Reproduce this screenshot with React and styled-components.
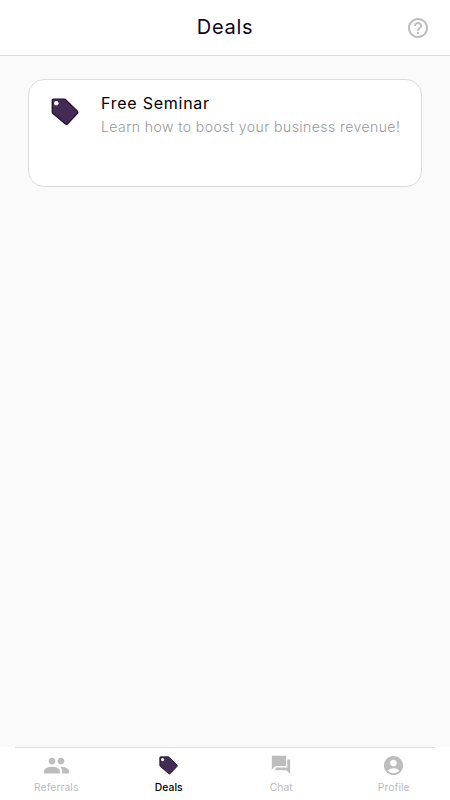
import styled, { createGlobalStyle } from "styled-components";
import { MdAccountCircle, MdHelpOutline, MdPeople } from "react-icons/md";

const GlobalStyle = createGlobalStyle`
  * {
    box-sizing: border-box;
  }

  body {
    margin: 0;
    background-color: #fafafa;
    font-family: "Inter", "Open Sans", sans-serif;
  }
`;

const Page = styled.div`
  display: flex;
  flex-direction: column;
  height: 100vh;
`;

const Header = styled.header`
  display: grid;
  grid-template-columns: 1fr auto 1fr;
  align-items: center;
  height: 56px;
  padding: 0 20px;
  background-color: white;
  border-bottom: 1px solid #dbdbdb;
`;

const Title = styled.h1`
  grid-column: 2;
  margin: 0 0 1px;
  font-size: 20px;
  line-height: 24px;
  font-weight: 400;
  letter-spacing: 0.7px;
  color: #0d0524;
`;

const HelpButton = styled.button`
  justify-self: end;
  display: flex;
  padding: 0;
  border: none;
  background: none;
  color: #bdbdbd;
  cursor: pointer;
`;

const Main = styled.main`
  flex: 1;
  padding: 23px 28px;
`;

const Card = styled.article`
  display: flex;
  height: 108px;
  padding: 13px 20px 0 22px;
  background-color: white;
  border: 1px solid #dbdbdb;
  border-radius: 16px;
`;

const CardIcon = styled.div`
  width: 50px;
  padding-top: 5px;
`;

const CardTitle = styled.h2`
  margin: 0;
  font-size: 16px;
  line-height: 20px;
  font-weight: 400;
  letter-spacing: 0.75px;
  color: #000;
`;

const CardText = styled.p`
  margin: 5px 0 0;
  font-size: 14px;
  line-height: 18px;
  font-weight: 300;
  letter-spacing: 0.44px;
  white-space: nowrap;
  color: #999;
`;

const TabBar = styled.nav`
  display: flex;
  height: 53px;
  background: linear-gradient(#dbdbdb, #dbdbdb) center top / 420px 1px no-repeat, white;
`;

const Tab = styled.a`
  flex: 1;
  display: flex;
  flex-direction: column;
  align-items: center;
  padding-top: 5px;
  font-size: 10.3px;
  line-height: 14px;
  font-weight: ${({ $active }) => ($active ? 500 : 400)};
  letter-spacing: 0.1px;
  color: ${({ $active }) => ($active ? "#000" : "#bdbdbd")};
  text-decoration: none;
`;

const TabIcon = styled.span`
  display: flex;
  align-items: center;
  justify-content: center;
  height: 26px;
  margin-bottom: 2px;
`;

function TagIcon({ size }) {
  return (
    <svg width={size} height={size} viewBox="0 0 28 28" fill="none">
      <path
        d="M2.2 1.2h11.3c.6 0 1 .2 1.4.6l11.3 11.1c.9.9.9 1.9 0 2.8l-9.4 10c-.8.9-1.8.9-2.7 0L1.8 15.3c-.4-.4-.6-.9-.6-1.5V2.2c0-.6.4-1 1-1z"
        fill="#432b54"
        stroke="#1c0c38"
        strokeWidth="1.2"
      />
      <circle cx="5.3" cy="5.3" r="2.3" fill="white" />
    </svg>
  );
}

function ChatIcon({ size }) {
  return (
    <svg width={size} height={size} viewBox="0 0 24 24" fill="currentColor">
      <path d="M22 6h-3.2v8.6H6v3.2h12l4 4V6zm-4.5 7V2H2v15l4-4h11.5z" />
    </svg>
  );
}

const tabs = [
  { label: "Referrals", icon: <MdPeople size={27} /> },
  { label: "Deals", icon: <TagIcon size={19} />, active: true },
  { label: "Chat", icon: <ChatIcon size={22} /> },
  { label: "Profile", icon: <MdAccountCircle size={23} /> },
];

function App() {
  return (
    <>
      <GlobalStyle />
      <Page>
        <Header>
          <Title>Deals</Title>
          <HelpButton aria-label="Help">
            <MdHelpOutline size={24} />
          </HelpButton>
        </Header>
        <Main>
          <Card>
            <CardIcon>
              <TagIcon size={28} />
            </CardIcon>
            <div>
              <CardTitle>Free Seminar</CardTitle>
              <CardText>Learn how to boost your business revenue!</CardText>
            </div>
          </Card>
        </Main>
        <TabBar>
          {tabs.map((tab) => (
            <Tab key={tab.label} href="#" $active={tab.active}>
              <TabIcon>{tab.icon}</TabIcon>
              {tab.label}
            </Tab>
          ))}
        </TabBar>
      </Page>
    </>
  );
}

export default App;
